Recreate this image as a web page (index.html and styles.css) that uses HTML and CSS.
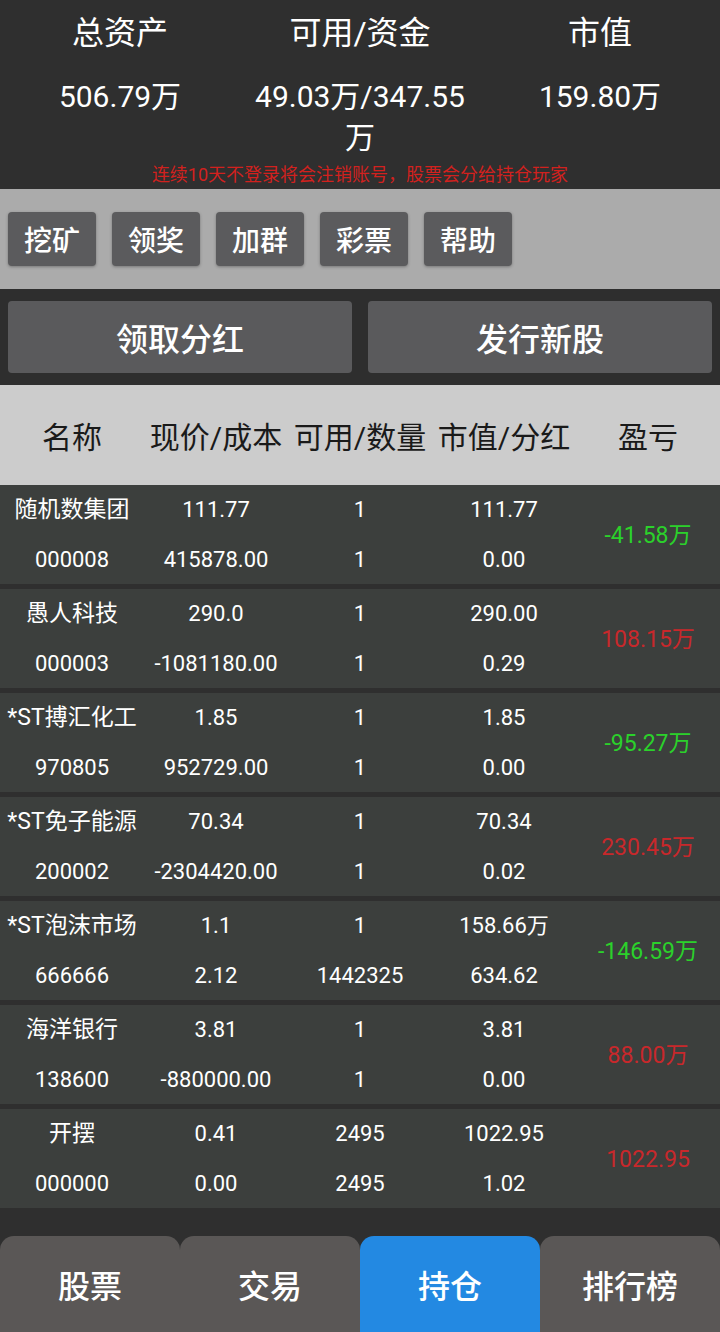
FILE: index.html
```html
<!DOCTYPE html>
<html lang="zh-CN">
<head>
<meta charset="utf-8">
<title>持仓</title>
<link rel="stylesheet" href="styles.css">
</head>
<body>
<div class="app">
  <section class="summary">
    <div class="summary-grid">
      <div class="sum-col"><div class="sum-label">总资产</div><div class="sum-value">506.79万</div></div>
      <div class="sum-col"><div class="sum-label">可用/资金</div><div class="sum-value">49.03万/347.55万</div></div>
      <div class="sum-col"><div class="sum-label">市值</div><div class="sum-value">159.80万</div></div>
    </div>
    <div class="notice">连续10天不登录将会注销账号，股票会分给持仓玩家</div>
  </section>

  <section class="tools">
    <button class="tool-btn">挖矿</button>
    <button class="tool-btn">领奖</button>
    <button class="tool-btn">加群</button>
    <button class="tool-btn">彩票</button>
    <button class="tool-btn">帮助</button>
  </section>

  <section class="actions">
    <button class="action-btn">领取分红</button>
    <button class="action-btn">发行新股</button>
  </section>

  <div class="table-head">
    <div>名称</div><div>现价/成本</div><div>可用/数量</div><div>市值/分红</div><div>盈亏</div>
  </div>

  <div class="rows">
    <div class="row">
      <div class="name">随机数集团</div><div>111.77</div><div>1</div><div>111.77</div>
      <div class="pl up">-41.58万</div>
      <div>000008</div><div>415878.00</div><div>1</div><div>0.00</div>
    </div>
    <div class="row">
      <div class="name">愚人科技</div><div>290.0</div><div>1</div><div>290.00</div>
      <div class="pl down">108.15万</div>
      <div>000003</div><div>-1081180.00</div><div>1</div><div>0.29</div>
    </div>
    <div class="row">
      <div class="name">*ST搏汇化工</div><div>1.85</div><div>1</div><div>1.85</div>
      <div class="pl up">-95.27万</div>
      <div>970805</div><div>952729.00</div><div>1</div><div>0.00</div>
    </div>
    <div class="row">
      <div class="name">*ST免子能源</div><div>70.34</div><div>1</div><div>70.34</div>
      <div class="pl down">230.45万</div>
      <div>200002</div><div>-2304420.00</div><div>1</div><div>0.02</div>
    </div>
    <div class="row">
      <div class="name">*ST泡沫市场</div><div>1.1</div><div>1</div><div>158.66万</div>
      <div class="pl up">-146.59万</div>
      <div>666666</div><div>2.12</div><div>1442325</div><div>634.62</div>
    </div>
    <div class="row">
      <div class="name">海洋银行</div><div>3.81</div><div>1</div><div>3.81</div>
      <div class="pl down">88.00万</div>
      <div>138600</div><div>-880000.00</div><div>1</div><div>0.00</div>
    </div>
    <div class="row">
      <div class="name">开摆</div><div>0.41</div><div>2495</div><div>1022.95</div>
      <div class="pl down">1022.95</div>
      <div>000000</div><div>0.00</div><div>2495</div><div>1.02</div>
    </div>
  </div>

  <nav class="tabbar">
    <div class="tab">股票</div>
    <div class="tab">交易</div>
    <div class="tab active">持仓</div>
    <div class="tab">排行榜</div>
  </nav>
</div>
</body>
</html>
```
FILE: styles.css
```css
* { box-sizing: border-box; }
html, body {
  margin: 0;
  padding: 0;
  background: #2f2f2f;
}
body {
  font-family: "Roboto", "Noto Sans CJK SC", sans-serif;
  color: #ffffff;
}
.app {
  width: 720px;
  height: 1332px;
  display: flex;
  flex-direction: column;
  overflow: hidden;
}
button {
  font-family: inherit;
  border: none;
  color: #ffffff;
  padding: 0;
  margin: 0;
}

/* summary */
.summary {
  height: 189px;
  padding-top: 12px;
  background: #2f2f2f;
}
.summary-grid {
  display: grid;
  grid-template-columns: repeat(3, 240px);
}
.sum-col {
  text-align: center;
  padding: 0 8px;
}
.sum-label {
  font-size: 32px;
  line-height: 42px;
}
.sum-value {
  margin-top: 22px;
  font-size: 30px;
  line-height: 41px;
}
.notice {
  text-align: center;
  color: #d2211e;
  font-size: 18px;
  line-height: 22px;
  margin-top: 6px;
}

/* tools */
.tools {
  height: 100px;
  background: #ababab;
  display: flex;
  align-items: center;
  gap: 16px;
  padding: 0 8px;
}
.tool-btn {
  width: 88px;
  height: 54px;
  background: #5b5b5d;
  border-radius: 4px;
  font-size: 28px;
  font-weight: 500;
  box-shadow: 0 1px 3px rgba(0, 0, 0, 0.3);
}

/* actions */
.actions {
  height: 96px;
  background: #2e2e2e;
  display: flex;
  gap: 16px;
  padding: 12px 8px;
}
.action-btn {
  flex: 1;
  height: 72px;
  background: #5a5a5c;
  border-radius: 4px;
  font-size: 32px;
  font-weight: 500;
}

/* table head */
.table-head {
  height: 100px;
  background: #cccccc;
  color: #1a1a1a;
  display: grid;
  grid-template-columns: repeat(5, 144px);
  align-items: center;
  text-align: center;
  font-size: 30px;
  white-space: nowrap;
}

/* rows */
.rows {
  display: flex;
  flex-direction: column;
  gap: 5px;
}
.row {
  height: 99px;
  background: #3c3f3d;
  display: grid;
  grid-template-columns: repeat(5, 144px);
  grid-template-rows: 50px 49px;
  align-items: center;
  text-align: center;
  font-size: 22px;
  white-space: nowrap;
}
.row > div { line-height: 26px; }
.row > .name { font-size: 23px; }
.pl {
  grid-column: 5;
  grid-row: 1 / span 2;
  font-size: 23px;
  position: relative;
  top: 1px;
}
.pl.up { color: #2bd12b; }
.pl.down { color: #c8282b; }

/* tabbar */
.tabbar {
  margin-top: auto;
  height: 96px;
  display: grid;
  grid-template-columns: repeat(4, 180px);
}
.tab {
  background: #5a5756;
  border-radius: 14px 14px 0 0;
  display: flex;
  align-items: center;
  justify-content: center;
  font-size: 32px;
  font-weight: 500;
}
.tab.active { background: #2389e2; }
```
